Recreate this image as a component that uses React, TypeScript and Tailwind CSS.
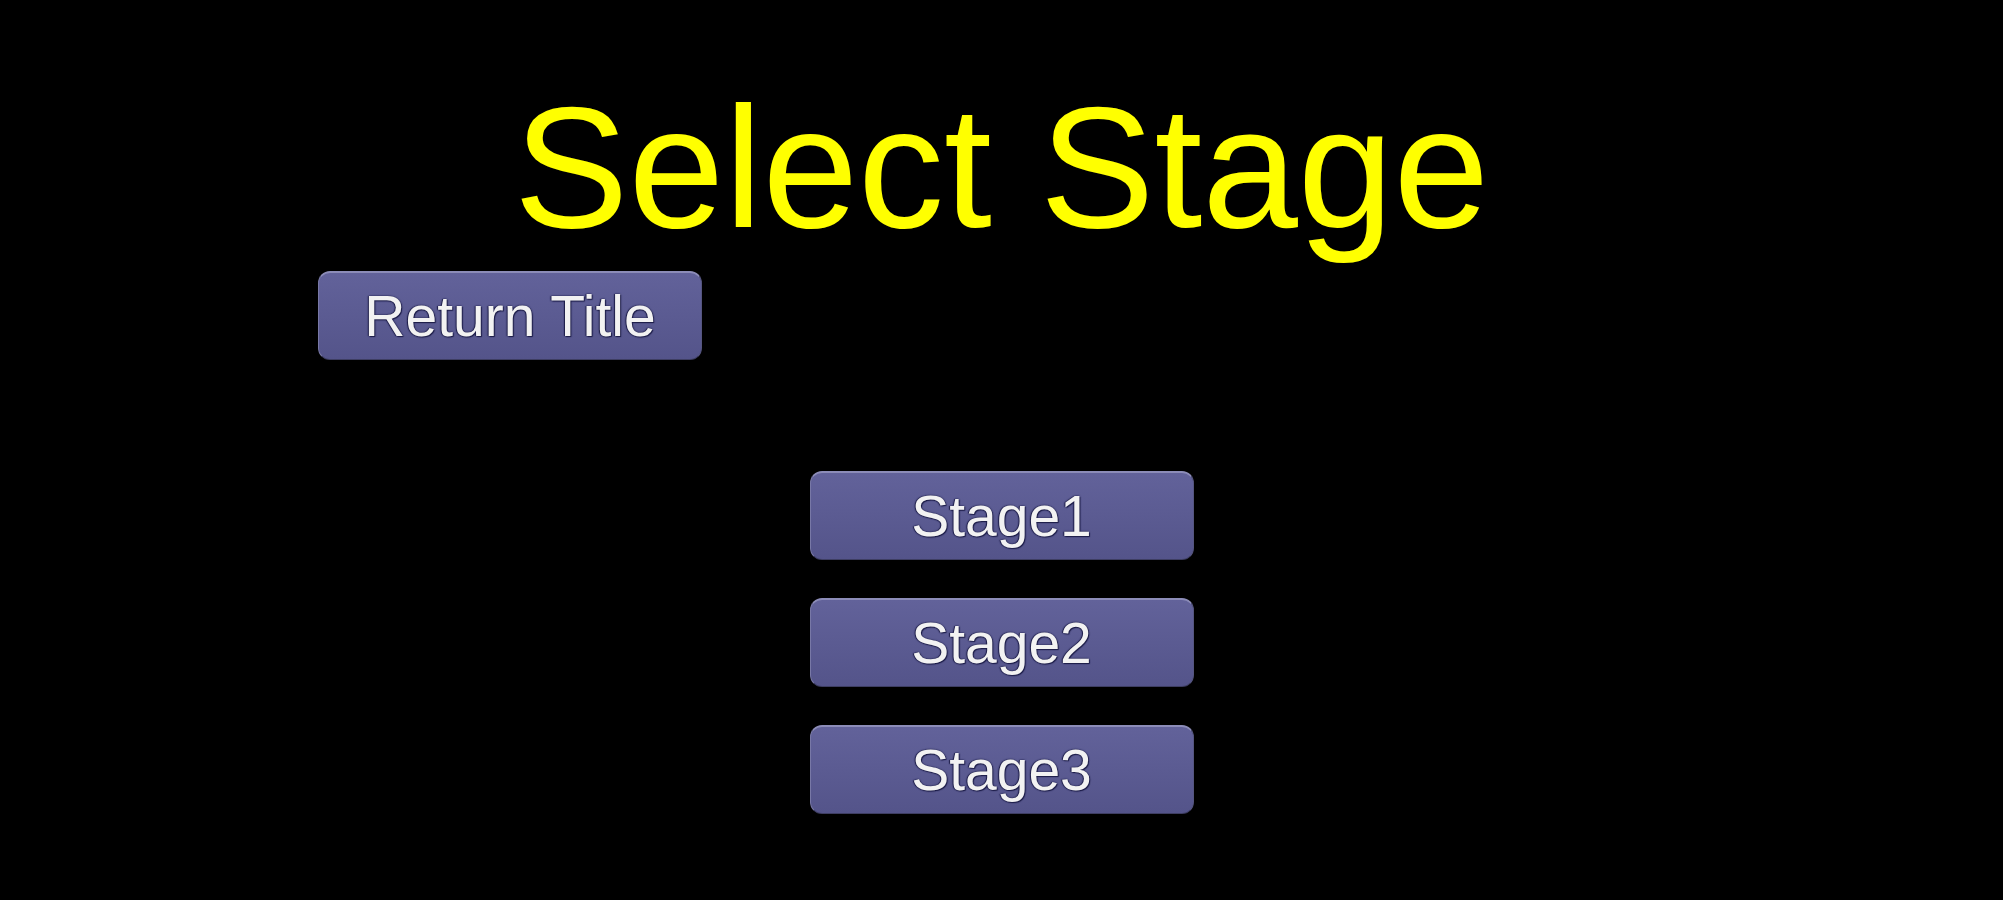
import React from 'react';

const MenuButton = ({ label, className = '' }: { label: string; className?: string }) => (
  <button
    className={`h-[89px] w-[384px] rounded-[12px] border-t-2 border-l border-r border-b border-t-[#8c8cb8] border-l-[#7878a6] border-r-[#55557f] border-b-[#3e3e62] bg-gradient-to-b from-[#62629a] to-[#54548a] text-[57px] leading-none text-[#f2f2f2] [text-shadow:0_0_2px_#1c1c48,1px_1px_1px_#1c1c48,-1px_0_1px_#1c1c48] ${className}`}
    style={{ fontFamily: '"Liberation Sans", Arial, sans-serif' }}
  >
    {label}
  </button>
);

const App = () => {
  return (
    <div
      className="min-h-[900px] w-full bg-black pt-[81px]"
      style={{ fontFamily: '"Liberation Sans", Arial, sans-serif' }}
    >
      <h1 className="text-center text-[172px] leading-none text-[#ffff00]">Select Stage</h1>

      <div className="mt-[18px] pl-[318px]">
        <MenuButton label="Return Title" />
      </div>

      <div className="mt-[111px] flex flex-col items-center gap-[38px]">
        <MenuButton label="Stage1" />
        <MenuButton label="Stage2" />
        <MenuButton label="Stage3" />
      </div>
    </div>
  );
};

export default App;
